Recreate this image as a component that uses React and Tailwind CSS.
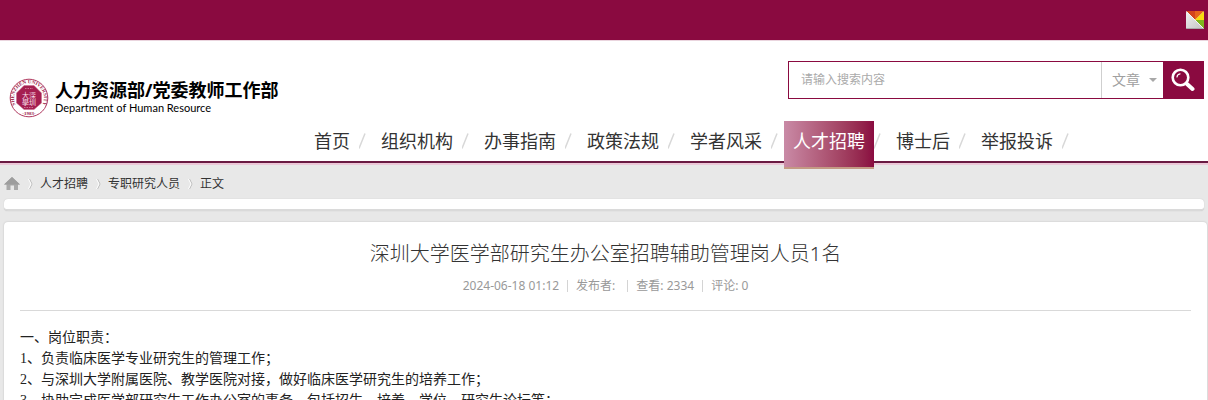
import React from 'react';

const navItems = ['首页', '组织机构', '办事指南', '政策法规', '学者风采', '人才招聘', '博士后', '举报投诉'];

const crumbs = ['人才招聘', '专职研究人员', '正文'];

const duties = [
  '一、岗位职责：',
  '1、负责临床医学专业研究生的管理工作；',
  '2、与深圳大学附属医院、教学医院对接，做好临床医学研究生的培养工作；',
  '3、协助完成医学部研究生工作办公室的事务，包括招生、培养、学位、研究生论坛等；',
];

const Seal = () => (
  <svg className="h-10 w-10 shrink-0" viewBox="0 0 40 40" aria-hidden="true">
    <defs>
      <path id="sealTop" d="M7.5 28.500 A15 15 0 1 1 32.5 28.500" />
    </defs>
    <circle cx="20" cy="20" r="18.8" fill="#fff" stroke="#b03a60" strokeWidth="1" />
    <text fill="#9c1c4a" fontSize="5" fontWeight="bold" fontFamily="Liberation Serif, serif">
      <textPath href="#sealTop" startOffset="50%" textAnchor="middle">SHENZHEN UNIVERSITY</textPath>
    </text>
    <path d="M15 7.500 H25 L32.500 15 V25 L25 31.500 H15 L7.500 25 V15 Z" fill="#a51f50" stroke="#c76a8b" strokeWidth="0.5" />
    <g fill="#f6dde6" fontSize="7" fontFamily="Noto Sans CJK TC, sans-serif" textAnchor="middle">
      <text x="20" y="19.500">大深</text>
      <text x="20" y="27">學圳</text>
    </g>
    <path d="M16 10.500 H24 M15 29.500 H25" stroke="#d58aa5" strokeWidth="0.8" strokeDasharray="1.500 1" />
    <text x="20" y="37.300" fill="#9c1c4a" fontSize="5" fontWeight="bold" fontFamily="Liberation Serif, serif" textAnchor="middle">·1983·</text>
  </svg>
);

const PaletteIcon = () => (
  <svg className="h-[18px] w-[18px]" viewBox="0 0 18 18" aria-hidden="true">
    <defs>
      <clipPath id="palette"><rect width="18" height="18" rx="1.500" /></clipPath>
      <linearGradient id="silver" x1="0" y1="0" x2="1" y2="1">
        <stop offset="0" stopColor="#f2f2f2" />
        <stop offset="1" stopColor="#c2c2c2" />
      </linearGradient>
    </defs>
    <g clipPath="url(#palette)">
      <rect width="18" height="18" fill="url(#silver)" />
      <path d="M0 0 H9 V9 Z" fill="#d4441c" />
      <path d="M9 9 V0 H18 Z" fill="#e8641a" />
      <path d="M9 9 L18 0 V9 Z" fill="#f7dc0f" />
      <path d="M9 9 H18 V18 Z" fill="#7fb51c" />
      <path d="M0 0 L18 18" stroke="#f4f4f4" strokeWidth="1" />
      <path d="M0 17.500 H18" stroke="#a9a9a9" strokeWidth="1" />
    </g>
  </svg>
);

const SearchIcon = () => (
  <svg className="h-6 w-6" viewBox="0 0 24 24" fill="none" stroke="#fff" strokeLinecap="round" aria-hidden="true">
    <circle cx="9.500" cy="9.500" r="7.800" strokeWidth="2.600" />
    <path d="M6 9 A3.500 3.500 0 0 1 9 5.800" strokeWidth="1.200" />
    <path d="M16 16 L21.500 21" strokeWidth="4" />
  </svg>
);

const HomeIcon = () => (
  <svg className="h-4 w-4" viewBox="0 0 16 16" aria-hidden="true">
    <path d="M8 1 L16 8.500 H14 V14 H10 V9.500 H6.500 V14 H2.500 V8.500 H0 Z" fill="#a9a9a9" />
    <path d="M8 1 L16 8.500 H0 Z" fill="#9d9d9d" />
  </svg>
);

const Chevron = () => (
  <svg className="h-3 w-5" viewBox="0 0 20 12" fill="none" aria-hidden="true">
    <path d="M9.500 1 L12 6 L9.500 11" stroke="#b8b8b8" />
    <path d="M8.500 1 L11 6 L8.500 11" stroke="#fff" />
  </svg>
);

const SearchBox = () => (
  <form className="flex h-[38px] w-[416px] border border-[#8a0a40] bg-white" onSubmit={(e) => e.preventDefault()}>
    <input
      type="text"
      aria-label="搜索"
      placeholder="请输入搜索内容"
      className="min-w-0 flex-1 px-3 text-xs outline-none placeholder:text-[#aaa]"
    />
    <div className="relative w-[62px] border-l border-[#cfcfcf]">
      <select aria-label="搜索类型" className="h-full w-full appearance-none bg-transparent pl-2.5 text-sm text-[#a0a0a0] outline-none">
        <option>文章</option>
      </select>
      <svg className="pointer-events-none absolute top-4 right-1.5 h-1 w-2" viewBox="0 0 8 4" aria-hidden="true">
        <path d="M0 0 H8 L4 4 Z" fill="#a8a8a8" />
      </svg>
    </div>
    <button type="submit" aria-label="搜索" className="flex w-10 items-center justify-center bg-[#8a0a40]">
      <SearchIcon />
    </button>
  </form>
);

const Nav = () => (
  <nav className="flex pl-[305px]">
    {navItems.map((item) => (
      <div key={item} className="flex h-10">
        <a
          href="#"
          className={
            item === '人才招聘'
              ? 'z-10 h-12 border-b-2 border-[#c49a84] bg-linear-to-r from-[#c98aa6] to-[#8a0a40] px-[9px] text-lg leading-10 text-white'
              : 'px-[9px] text-lg leading-10 text-[#333]'
          }
        >
          {item}
        </a>
        <svg className="mt-3 h-4 w-[13px]" viewBox="0 0 13 16" aria-hidden="true">
          <path d="M6 0.500 L0 15.500" stroke="#d8d8d8" strokeWidth="1.500" />
        </svg>
      </div>
    ))}
  </nav>
);

const App = () => {
  return (
    <div className="min-h-screen bg-[#e8e8e8] font-['Noto_Sans','Noto_Sans_CJK_SC',sans-serif] text-[#333]">
      <div className="flex h-10 items-center justify-end bg-[#8a0a40] px-1">
        <button type="button" aria-label="切换风格">
          <PaletteIcon />
        </button>
      </div>

      <header className="border-b-2 border-[#6a1a42] bg-white">
        <div className="flex h-[81px] items-start justify-between border-t border-[#ead5de] pt-5 pr-1 pl-[9px]">
          <a href="#" className="mt-[17px] flex items-center gap-1.5 text-black">
            <Seal />
            <span>
              <span className="block text-lg leading-5 font-bold">人力资源部/党委教师工作部</span>
              <span className="block font-['Lato',sans-serif] text-[11px] leading-4">Department of Human Resource</span>
            </span>
          </a>
          <SearchBox />
        </div>
        <Nav />
      </header>

      <div className="flex h-9 items-center border-t-2 border-[#ecc8d8] px-1 pt-1 text-xs">
        <a href="#" aria-label="首页">
          <HomeIcon />
        </a>
        {crumbs.map((crumb) => (
          <div key={crumb} className="flex items-center">
            <Chevron />
            <a href="#">{crumb}</a>
          </div>
        ))}
      </div>

      <div className="mx-1 h-3 rounded border-b-2 border-[#dadada] bg-white shadow-[0_0_1px_#bbb]"></div>

      <main className="mt-[11px] mr-px ml-1 rounded bg-white px-4 pb-8 shadow-[0_0_2px_#bbb]">
        <div className="border-b border-[#d9d9d9] pt-4 pb-4 text-center">
          <h1 className="text-xl leading-8 font-light text-[#333]">深圳大学医学部研究生办公室招聘辅助管理岗人员1名</h1>
          <p className="mt-2 flex items-center justify-center text-xs text-[#999]">
            <span>2024-06-18 01:12</span>
            <span className="mx-2 h-3 w-px bg-[#d4d4d4]"></span>
            <span>发布者:</span>
            <span className="mr-2 ml-3 h-3 w-px bg-[#d4d4d4]"></span>
            <span>查看: 2334</span>
            <span className="mx-2 h-3 w-px bg-[#d4d4d4]"></span>
            <span>评论: 0</span>
          </p>
        </div>
        <article className="pt-4 font-['Liberation_Serif','Noto_Sans_CJK_SC',sans-serif] text-sm leading-[21px] text-[#222]">
          {duties.map((line) => (
            <p key={line}>{line}</p>
          ))}
        </article>
      </main>
    </div>
  );
};

export default App;
